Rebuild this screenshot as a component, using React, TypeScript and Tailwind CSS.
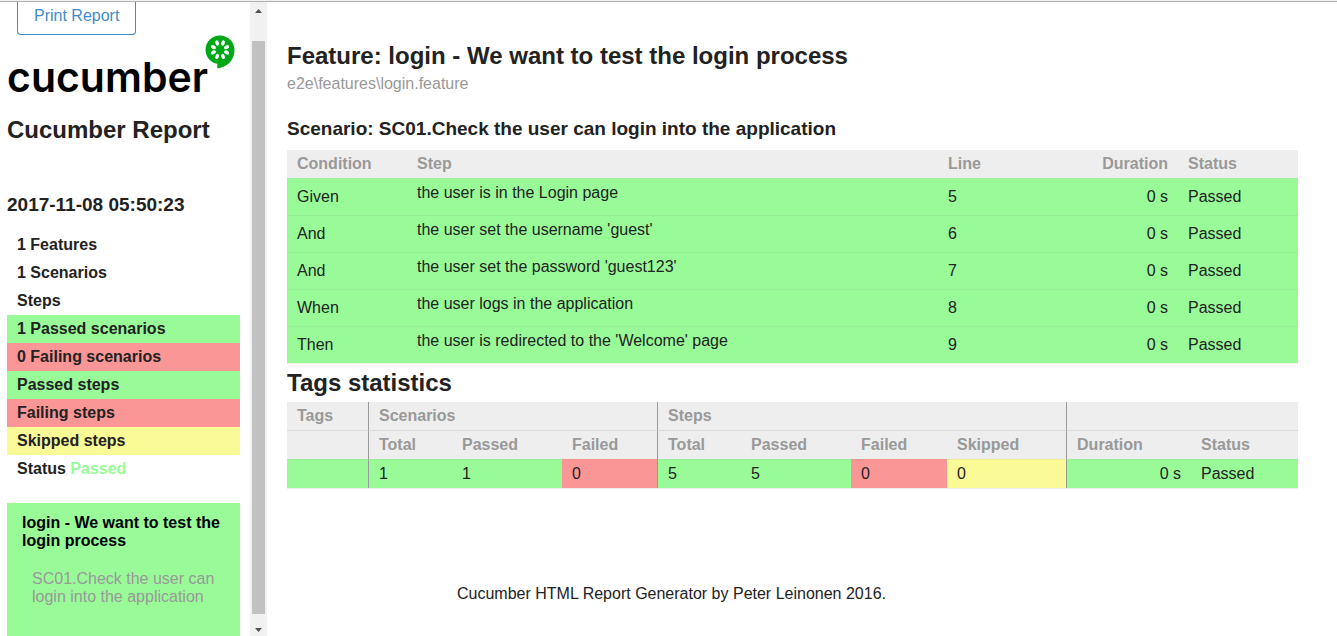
import React from "react";

const summary = [
  { label: "1 Features", tone: "" },
  { label: "1 Scenarios", tone: "" },
  { label: "Steps", tone: "" },
  { label: "1 Passed scenarios", tone: "bg-[#98fb98]" },
  { label: "0 Failing scenarios", tone: "bg-[#fb9696]" },
  { label: "Passed steps", tone: "bg-[#98fb98]" },
  { label: "Failing steps", tone: "bg-[#fb9696]" },
  { label: "Skipped steps", tone: "bg-[#fafa96]" },
];

const steps = [
  { condition: "Given", text: "the user is in the Login page", line: 5 },
  { condition: "And", text: "the user set the username 'guest'", line: 6 },
  { condition: "And", text: "the user set the password 'guest123'", line: 7 },
  { condition: "When", text: "the user logs in the application", line: 8 },
  { condition: "Then", text: "the user is redirected to the 'Welcome' page", line: 9 },
];

const seeds = [
  { x: 12.2, y: 8, angle: -22 },
  { x: 18, y: 8, angle: 22 },
  { x: 8.4, y: 12.2, angle: -62 },
  { x: 21.6, y: 12.2, angle: 62 },
  { x: 8.4, y: 17.4, angle: 62 },
  { x: 21.6, y: 17.4, angle: -62 },
  { x: 12.2, y: 21.4, angle: 22 },
  { x: 18, y: 21.4, angle: -22 },
];

function Logo() {
  return (
    <div className="flex h-[60px] items-start">
      <span className="w-[198px] pt-[15px] font-[Inter] text-[41px] leading-[54px] font-semibold whitespace-nowrap text-black">
        cucumber
      </span>
      <svg viewBox="0 0 30 34" className="h-[34px] w-[30px] shrink-0" aria-hidden="true">
        <path
          d="M15 .5C6.9.5.5 6.9.5 14.700c0 7.300 5 12.900 11.800 14.100V33.500C21.500 32.200 29.500 26 29.500 15 29.500 6.900 23 .5 15 .5Z"
          fill="#00a818"
        />
        {seeds.map((seed) => (
          <ellipse
            key={`${seed.x}-${seed.y}`}
            cx={seed.x}
            cy={seed.y}
            rx="1.800"
            ry="2.700"
            fill="#fff"
            transform={`rotate(${seed.angle} ${seed.x} ${seed.y})`}
          />
        ))}
      </svg>
    </div>
  );
}

function Sidebar() {
  return (
    <aside className="w-[250px] shrink-0 overflow-hidden pr-2.5 pl-[7px]">
      <button
        type="button"
        className="ml-2.5 block h-[33px] rounded-b border border-t-0 border-[#428bca] px-4 pb-1 leading-[18px] text-[#428bca]"
      >
        Print Report
      </button>
      <Logo />
      <h1 className="mt-5 text-2xl leading-[30px] font-bold">Cucumber Report</h1>
      <h2 className="mt-12 text-[19px] leading-6 font-bold">2017-11-08 05:50:23</h2>
      <ul className="mt-[14px] font-bold">
        {summary.map((item) => (
          <li key={item.label} className={`px-2.5 py-[5px] leading-[18px] ${item.tone}`}>
            {item.label}
          </li>
        ))}
        <li className="px-2.5 py-[5px] leading-[18px]">
          Status <span className="text-[#98fb98]">Passed</span>
        </li>
      </ul>
      <nav className="mt-5 h-60 bg-[#98fb98] px-[15px] py-[11px] leading-[18px]">
        <a href="#feature" className="block font-bold text-black">
          login - We want to test the login process
        </a>
        <a href="#scenario" className="mt-5 block pl-2.5 text-[#999]">
          SC01.Check the user can login into the application
        </a>
      </nav>
    </aside>
  );
}

function Scrollbar() {
  return (
    <div className="flex w-[17px] shrink-0 flex-col items-center bg-[#f1f1f1]" aria-hidden="true">
      <svg viewBox="0 0 17 17" className="h-[17px] w-[17px]">
        <path d="M5 11h7L8.500 7Z" fill="#505050" />
      </svg>
      <div className="mt-[22px] w-[13px] grow bg-[#c1c1c1]" />
      <svg viewBox="0 0 17 17" className="mt-[5px] h-[17px] w-[17px]">
        <path d="M5 9h7L8.500 13Z" fill="#505050" />
      </svg>
    </div>
  );
}

function StepsTable() {
  const cell = "border-t border-[#95ed95] px-2.5";
  return (
    <table className="mt-[9px] w-full table-fixed border-separate border-spacing-0 border-b border-[#eee] leading-[18px]">
      <colgroup>
        <col className="w-[120px]" />
        <col />
        <col className="w-[120px]" />
        <col className="w-[120px]" />
        <col className="w-[120px]" />
      </colgroup>
      <thead className="bg-[#eee] text-left text-[#999]">
        <tr>
          <th className="px-2.5 py-[5px]">Condition</th>
          <th className="px-2.5 py-[5px]">Step</th>
          <th className="px-2.5 py-[5px]">Line</th>
          <th className="px-2.5 py-[5px] text-right">Duration</th>
          <th className="px-2.5 py-[5px]">Status</th>
        </tr>
      </thead>
      <tbody className="bg-[#98fb98]">
        {steps.map((step) => (
          <tr key={step.line} className="h-[37px]">
            <td className={cell}>{step.condition}</td>
            <td className="border-t border-[#95ed95] px-2.5 pt-[5px] align-top">{step.text}</td>
            <td className={cell}>{step.line}</td>
            <td className={`${cell} text-right`}>0 s</td>
            <td className={cell}>Passed</td>
          </tr>
        ))}
      </tbody>
    </table>
  );
}

function TagsTable() {
  const th = "px-2.5 py-[5px]";
  const sub = "border-t border-t-[#dadada] px-2.5 py-[5px]";
  const td = "border-t border-t-[#95ed95] px-2.5 py-[5px]";
  const split = "border-r border-r-[#999]";
  return (
    <table className="mt-1 w-full table-fixed border-separate border-spacing-0 border-b border-[#eee] leading-[18px]">
      <colgroup>
        <col className="w-[82px]" />
        <col className="w-[83px]" />
        <col className="w-[110px]" />
        <col className="w-[96px]" />
        <col className="w-[83px]" />
        <col className="w-[110px]" />
        <col className="w-[96px]" />
        <col className="w-[120px]" />
        <col className="w-[124px]" />
        <col className="w-[107px]" />
      </colgroup>
      <thead className="bg-[#eee] text-left text-[#999]">
        <tr>
          <th className={`${th} ${split}`}>Tags</th>
          <th colSpan={3} className={`${th} ${split}`}>Scenarios</th>
          <th colSpan={4} className={`${th} ${split}`}>Steps</th>
          <th colSpan={2} className={th} />
        </tr>
        <tr>
          <th className={`${sub} ${split}`} />
          <th className={sub}>Total</th>
          <th className={sub}>Passed</th>
          <th className={`${sub} ${split}`}>Failed</th>
          <th className={sub}>Total</th>
          <th className={sub}>Passed</th>
          <th className={sub}>Failed</th>
          <th className={`${sub} ${split}`}>Skipped</th>
          <th className={sub}>Duration</th>
          <th className={sub}>Status</th>
        </tr>
      </thead>
      <tbody className="bg-[#98fb98]">
        <tr>
          <td className={`${td} ${split}`} />
          <td className={td}>1</td>
          <td className={td}>1</td>
          <td className={`border-t border-t-[#f29393] bg-[#fb9696] px-2.5 py-[5px] ${split}`}>0</td>
          <td className={td}>5</td>
          <td className={td}>5</td>
          <td className="border-t border-t-[#f29393] bg-[#fb9696] px-2.5 py-[5px]">0</td>
          <td className={`border-t border-t-[#ecec95] bg-[#fafa96] px-2.5 py-[5px] ${split}`}>0</td>
          <td className={`${td} text-right`}>0 s</td>
          <td className={td}>Passed</td>
        </tr>
      </tbody>
    </table>
  );
}

export default function App() {
  return (
    <div className="flex h-screen flex-col overflow-hidden bg-white font-['Liberation_Sans',Arial,sans-serif] text-base text-[#222]">
      <div className="h-0.5 shrink-0 border-b border-[#b0b0b0] bg-[#f1f1f1]" />
      <div className="flex min-h-0 grow">
        <Sidebar />
        <Scrollbar />
        <main className="min-w-0 grow overflow-hidden pt-[39px] pr-[39px] pl-5">
          <h2 id="feature" className="text-2xl leading-[30px] font-bold">
            Feature: login - We want to test the login process
          </h2>
          <p className="mt-1 leading-[18px] text-[#999]">e2e\features\login.feature</p>
          <h3 id="scenario" className="mt-6 text-[19px] leading-6 font-bold">
            Scenario: SC01.Check the user can login into the application
          </h3>
          <StepsTable />
          <h2 className="mt-1 text-2xl leading-[30px] font-bold">Tags statistics</h2>
          <TagsTable />
          <footer className="mt-24 pl-[170px] leading-[18px]">
            Cucumber HTML Report Generator by Peter Leinonen 2016.
          </footer>
        </main>
      </div>
    </div>
  );
}
